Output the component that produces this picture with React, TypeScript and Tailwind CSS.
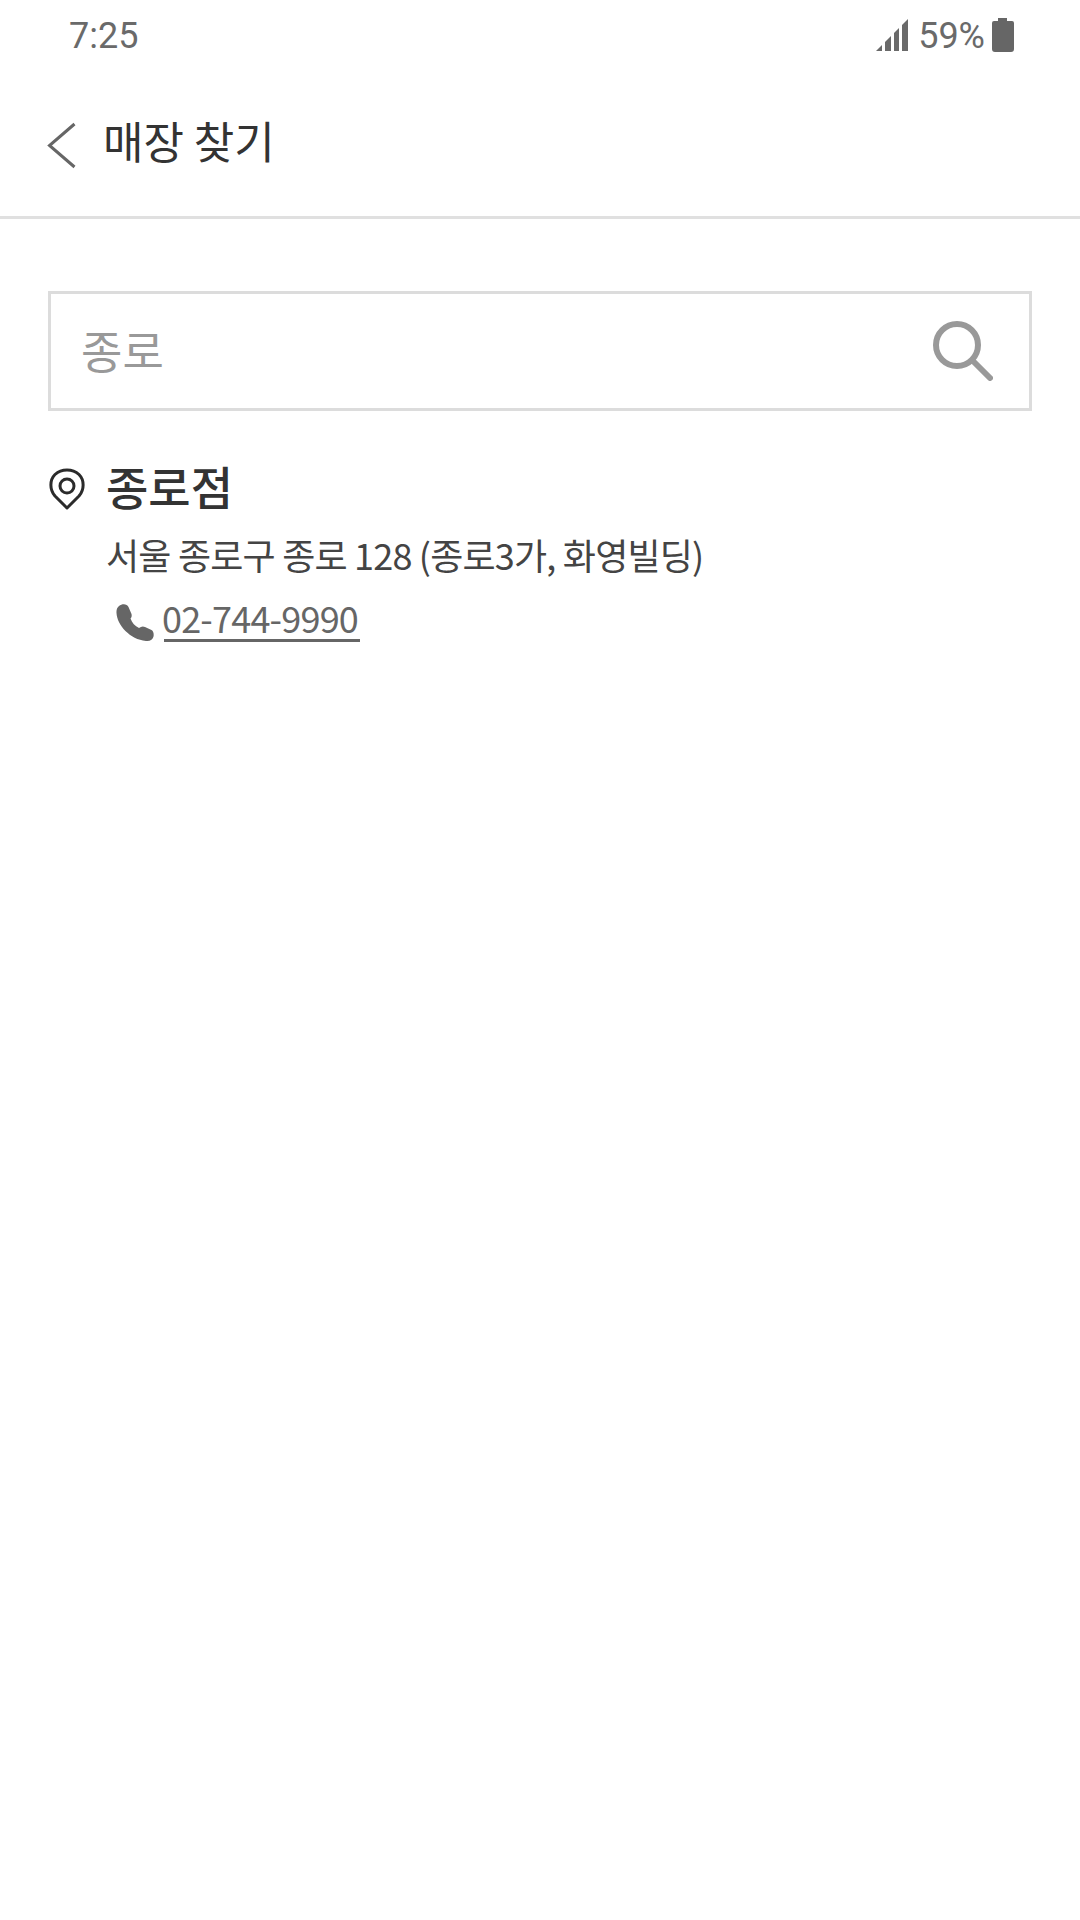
const CJK = "font-['Noto_Sans_CJK_KR','Noto_Sans',sans-serif]";

function SignalIcon() {
  return (
    <svg width="32" height="32" viewBox="0 0 32 32" fill="#6a6a6a">
      <path d="M0 32 L6 26 V32 Z" />
      <path d="M9 23 L15 17 V32 H9 Z" />
      <path d="M18 14 L23 9 V32 H18 Z" />
      <path d="M26 6 L32 0 V32 H26 Z" />
    </svg>
  );
}

function BatteryIcon() {
  return (
    <svg width="22" height="34" viewBox="0 0 22 34" fill="#666">
      <path d="M6 0 H15 V3 H20 Q22 3 22 5 V31 Q22 34 19 34 H3 Q0 34 0 31 V5 Q0 3 2 3 H6 Z" />
    </svg>
  );
}

function BackIcon() {
  return (
    <svg width="30" height="48" viewBox="0 0 30 48" fill="none" stroke="#666" strokeWidth="3">
      <path d="M27.5 2 L2.5 23.5 L27.5 45" />
    </svg>
  );
}

function SearchIcon() {
  return (
    <svg width="60" height="60" viewBox="0 0 60 60" fill="none" stroke="#999" strokeWidth="6" strokeLinecap="round">
      <circle cx="24" cy="24" r="21" />
      <path d="M39.5 39.5 L57 57" />
    </svg>
  );
}

function PinIcon() {
  return (
    <svg width="38" height="42" viewBox="0 0 38 42" fill="none" stroke="#2b2b2b" strokeWidth="3">
      <path d="M19 40 L7 28 C1.5 21.5 1.5 12 7 6.5 C13.5 0.5 24.5 0.5 31 6.5 C36.5 12 36.5 21.5 31 28 Z" strokeLinejoin="round" />
      <circle cx="19" cy="18" r="7" />
    </svg>
  );
}

function PhoneIcon() {
  return (
    <svg width="38" height="38" viewBox="0 0 38 38" fill="#666">
      <path d="M3 2 C6 -0.5 11 -0.5 12.5 3 L15.5 10 C16 12 15.5 13.5 14.5 14.5 C16 19 19 22 23 24 C25 22.5 27 22 29 23 L35.5 26 C37.5 27 38 30 37.5 32.5 C37 35.5 34 37.5 30 37 C14 35.5 1 21 0.5 9 C0.3 6 1 3.5 3 2 Z" />
    </svg>
  );
}

export default function App() {
  return (
    <div className={`min-h-[1920px] w-[1080px] bg-white ${CJK}`}>
      <div className="flex h-[70px] items-center justify-between pl-[69px] pr-[66px]">
        <span className="mt-[2px] font-['Roboto',sans-serif] text-[36px] leading-none text-[#6a6a6a]">7:25</span>
        <div className="flex items-center">
          <SignalIcon />
          <span className="ml-[10px] mr-[7px] mt-[2px] font-['Roboto',sans-serif] text-[36px] leading-none text-[#6a6a6a]">59%</span>
          <BatteryIcon />
        </div>
      </div>

      <header className="flex h-[149px] items-center border-b-[3px] border-[#e0e0e0] pl-[47px]">
        <div className="mt-[5px]">
          <BackIcon />
        </div>
        <h1 className="mb-[6px] ml-[26px] text-[44px] leading-none text-[#333]">매장 찾기</h1>
      </header>

      <main className="px-[48px] pt-[72px]">
        <div className="flex h-[120px] items-center justify-between border-[3px] border-[#dcdcdc] pl-[30px] pr-[36px]">
          <span className="mb-[3px] text-[45px] leading-none text-[#999]">종로</span>
          <SearchIcon />
        </div>

        <section className="mt-[49px] flex items-start">
          <div className="mt-[8px] w-[58px] shrink-0">
            <PinIcon />
          </div>
          <div>
            <h2 className="text-[46px] font-medium leading-[50px] text-[#333]">종로점</h2>
            <p className="mt-[19px] text-[36px] leading-[50px] tracking-[-0.8px] text-[#444]">
              서울 종로구 종로 128 (종로3가, 화영빌딩)
            </p>
            <div className="mt-[18px] flex items-center pl-[10px]">
              <div className="mt-[6px]">
                <PhoneIcon />
              </div>
              <a className="ml-[10px] border-b-[3px] border-[#666] text-[36px] leading-[40px] tracking-[-0.8px] text-[#666]">
                <span className="-ml-[2px] mr-[2px] inline-block pb-[2px]">02-744-9990</span>
              </a>
            </div>
          </div>
        </section>
      </main>
    </div>
  );
}
